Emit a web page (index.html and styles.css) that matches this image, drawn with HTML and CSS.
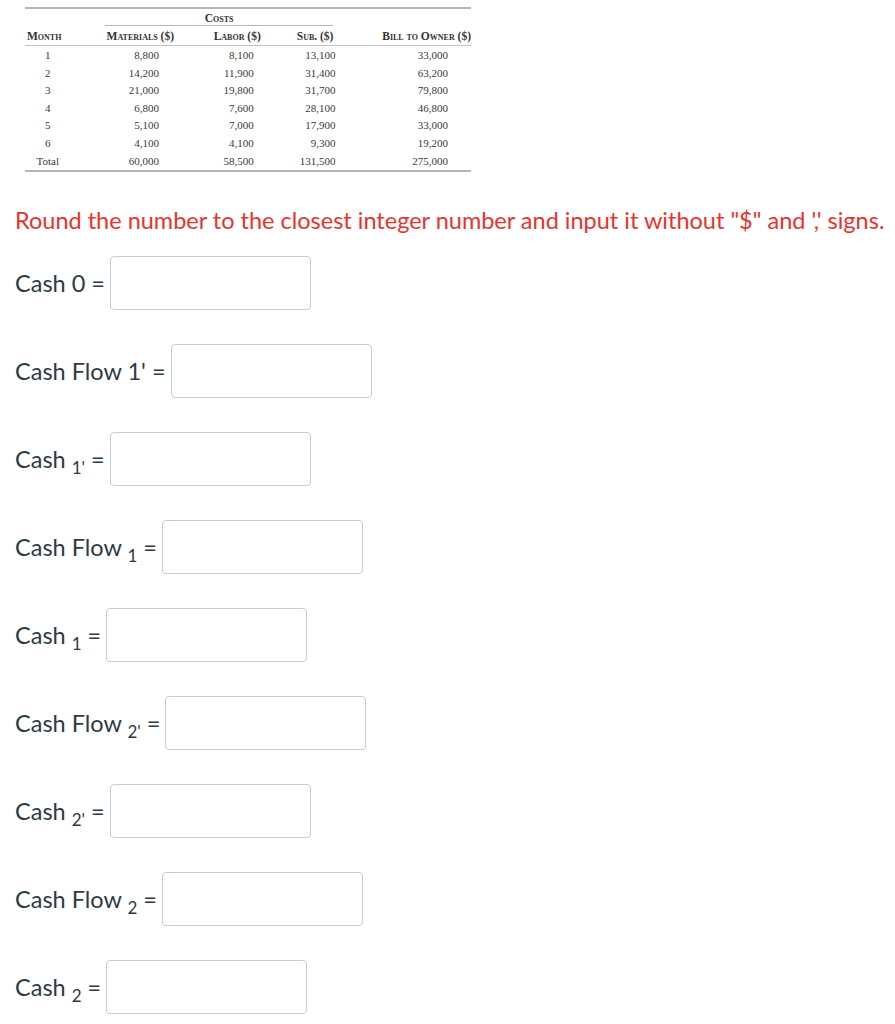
FILE: index.html
```html
<!DOCTYPE html>
<html>
<head>
<meta charset="utf-8">
<link rel="stylesheet" href="styles.css">
</head>
<body>
<div class="page">
  <table class="costs">
    <thead>
      <tr class="group">
        <th class="c1"></th>
        <th colspan="3" class="grp"><span class="grp-label">Costs</span></th>
        <th class="c5"></th>
      </tr>
      <tr class="heads">
        <th class="c1">Month</th>
        <th class="c2 h">Materials ($)</th>
        <th class="c3 h">Labor ($)</th>
        <th class="c4 h">Sub. ($)</th>
        <th class="c5 h">Bill to Owner ($)</th>
      </tr>
    </thead>
    <tbody>
      <tr class="first"><td class="c1">1</td><td class="c2">8,800</td><td class="c3">8,100</td><td class="c4">13,100</td><td class="c5">33,000</td></tr>
      <tr><td class="c1">2</td><td class="c2">14,200</td><td class="c3">11,900</td><td class="c4">31,400</td><td class="c5">63,200</td></tr>
      <tr><td class="c1">3</td><td class="c2">21,000</td><td class="c3">19,800</td><td class="c4">31,700</td><td class="c5">79,800</td></tr>
      <tr><td class="c1">4</td><td class="c2">6,800</td><td class="c3">7,600</td><td class="c4">28,100</td><td class="c5">46,800</td></tr>
      <tr><td class="c1">5</td><td class="c2">5,100</td><td class="c3">7,000</td><td class="c4">17,900</td><td class="c5">33,000</td></tr>
      <tr><td class="c1">6</td><td class="c2">4,100</td><td class="c3">4,100</td><td class="c4">9,300</td><td class="c5">19,200</td></tr>
      <tr class="last"><td class="c1">Total</td><td class="c2">60,000</td><td class="c3">58,500</td><td class="c4">131,500</td><td class="c5">275,000</td></tr>
    </tbody>
  </table>

  <p class="note">Round the number to the closest integer number and input it without "$" and ',' signs.</p>

  <div class="fields">
    <div class="field"><span class="label">Cash 0 =</span><input class="box" type="text"></div>
    <div class="field"><span class="label">Cash Flow 1' =</span><input class="box" type="text"></div>
    <div class="field"><span class="label">Cash <sub>1'</sub> =</span><input class="box" type="text"></div>
    <div class="field"><span class="label">Cash Flow <sub>1</sub> =</span><input class="box" type="text"></div>
    <div class="field"><span class="label">Cash <sub>1</sub> =</span><input class="box" type="text"></div>
    <div class="field"><span class="label">Cash Flow <sub>2'</sub> =</span><input class="box" type="text"></div>
    <div class="field"><span class="label">Cash <sub>2'</sub> =</span><input class="box" type="text"></div>
    <div class="field"><span class="label">Cash Flow <sub>2</sub> =</span><input class="box" type="text"></div>
    <div class="field"><span class="label">Cash <sub>2</sub> =</span><input class="box" type="text"></div>
  </div>
</div>
</body>
</html>
```

FILE: styles.css
```css
html, body {
  margin: 0;
  padding: 0;
  background: #ffffff;
}

.page {
  padding: 7px 0 0 0;
  font-family: Lato, "Open Sans", sans-serif;
}

.costs {
  margin-left: 25px;
  width: 446px;
  border-collapse: collapse;
  font-family: "Liberation Serif", "DejaVu Serif", serif;
  font-size: 11px;
  color: #3a3a3a;
  border-top: 2px solid #b5b5b5;
  border-bottom: 2px solid #b5b5b5;
}

.costs th, .costs td {
  padding: 0;
  white-space: nowrap;
}

.costs th {
  font-weight: bold;
  font-variant: small-caps;
  font-size: 11.5px;
  color: #333;
}

.group th {
  height: 17px;
  vertical-align: bottom;
}

.grp {
  text-align: center;
  padding-bottom: 2px !important;
}

.grp-label {
  display: block;
  margin-left: 38px;
  margin-right: 7px;
  border-bottom: 1px solid #b8b8b8;
  padding-bottom: 1px;
}

.heads th {
  height: 16px;
  border-bottom: 1px solid #c4c4c4;
  vertical-align: middle;
  padding-bottom: 1px;
}

.costs td {
  height: 17.6px;
  line-height: 17.6px;
  text-align: right;
}

.costs tr.first td {
  padding-top: 1px;
}

.c1 { width: 40px; text-align: center !important; }
.c2 { width: 110px; }
.c3 { width: 90px; }
.c4 { width: 80px; }
.c5 { width: 126px; }

.costs th.c1 { text-align: left !important; padding-left: 2px; }
.costs th.h { text-align: right; }
.costs th.c2 { padding-right: 5px; }
.costs th.c3 { padding-right: 6px; }
.costs th.c4 { padding-right: 7px; }
.costs th.c5 { padding-right: 0; }

.costs td.c1 { text-align: center; padding-left: 4px; }
.costs td.c2 { padding-right: 20px; }
.costs td.c3 { padding-right: 13px; }
.costs td.c4 { padding-right: 5px; }
.costs td.c5 { padding-right: 23px; }

.note {
  margin: 34px 0 0 15px;
  font-size: 23.5px;
  color: #e8332e;
  line-height: 28px;
  white-space: nowrap;
}

.fields {
  display: flex;
  flex-direction: column;
  gap: 34px;
  margin-top: 22px;
  padding-left: 15px;
}

.field {
  display: flex;
  align-items: center;
  gap: 5px;
  height: 54px;
}

.label {
  font-size: 23.5px;
  color: #2d3b45;
  white-space: nowrap;
}

.label sub {
  font-size: 17px;
  vertical-align: -6px;
  line-height: 0;
}

.box {
  box-sizing: border-box;
  width: 201px;
  height: 54px;
  border: 1px solid #c7cdd1;
  border-radius: 4px;
  background: #fff;
  margin: 0;
  padding: 0;
}
```
